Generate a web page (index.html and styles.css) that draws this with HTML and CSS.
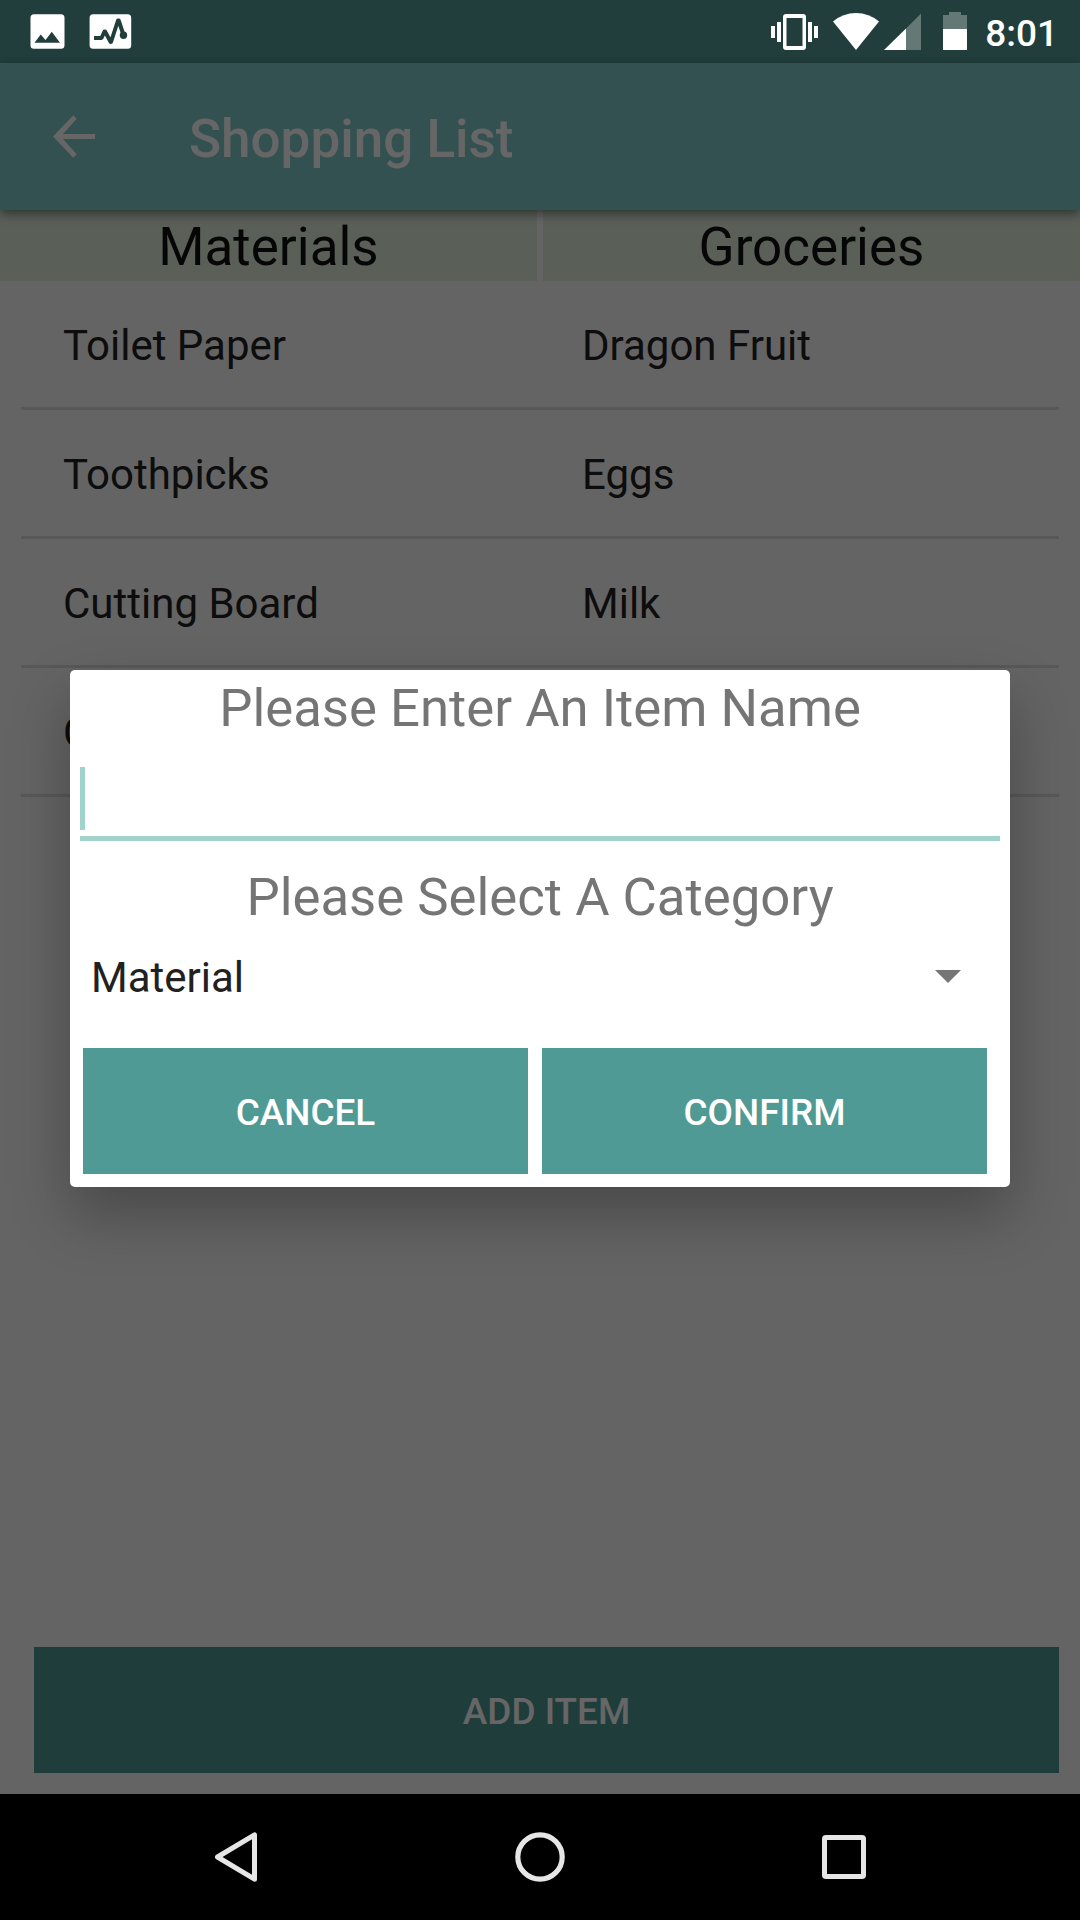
FILE: index.html
```html
<!DOCTYPE html>
<html lang="en">
<head>
<meta charset="utf-8">
<title>Shopping List</title>
<link rel="stylesheet" href="styles.css">
</head>
<body>
<div class="screen">
  <header class="status-bar">
    <svg class="status-left" width="102" height="36" viewBox="0 0 102 36">
      <path fill="#fff" fill-rule="evenodd" d="M4 .3h27a3.500 3.500 0 0 1 3.500 3.500v27.500a3.500 3.500 0 0 1-3.500 3.500H4a3.500 3.500 0 0 1-3.500-3.500V3.800A3.500 3.500 0 0 1 4 .3zM4.500 28.800h25.500L21.800 17.800 15.500 26 10.700 20.500z"/>
      <rect x="59.600" y=".3" width="41.600" height="34.500" rx="3.500" fill="#fff"/>
      <path d="M64 24h7.500l3-6.500h.5L80.700 28h.3L88 6.500h.7L93.500 21" fill="none" stroke="#213e3c" stroke-width="4" stroke-linejoin="round"/>
      <circle cx="93.500" cy="21.300" r="3.700" fill="#213e3c"/>
    </svg>
    <div class="status-right">
      <svg width="197" height="40" viewBox="0 0 197 40">
        <g fill="#fff">
          <path d="M0 14h4v12H0zM6 10h4v20H6zM37 10h4v20h-4zM43 14h4v12h-4z"/>
          <path fill-rule="evenodd" d="M15 2h17a3 3 0 0 1 3 3v30a3 3 0 0 1-3 3H15a3 3 0 0 1-3-3V5a3 3 0 0 1 3-3zm0.500 4v28h16V6z"/>
          <path d="M62 9.500Q72 1 85 1t23 8.500L85 38z"/>
          <path d="M113 38L135 16.500V38z"/>
          <path d="M172 17h24v21h-24z"/>
        </g>
        <path d="M135 16.500L150 1.500V38H135zM172 17V3h6V0h12v3h6v14z" class="faded"/>
      </svg>
      <span class="clock">8:01</span>
    </div>
  </header>

  <main class="app">
    <div class="toolbar">
      <svg class="back" width="42" height="43" viewBox="0 0 42 43">
        <path d="M42 19v5H10L23.700 39.200 20.300 42.800 0 21.500 20.300.2 23.700 3.800 10 19z" fill="#fff"/>
      </svg>
      <h1 class="toolbar-title">Shopping List</h1>
    </div>
    <div class="headings">
      <h2 class="heading">Materials</h2>
      <h2 class="heading">Groceries</h2>
    </div>
    <ul class="list">
      <li class="row"><span>Toilet Paper</span><span>Dragon Fruit</span></li>
      <li class="row"><span>Toothpicks</span><span>Eggs</span></li>
      <li class="row"><span>Cutting Board</span><span>Milk</span></li>
      <li class="row"><span>C</span><span></span></li>
    </ul>
    <button class="button add">ADD ITEM</button>
    <div class="scrim">
      <section class="dialog">
        <h3 class="label">Please Enter An Item Name</h3>
        <div class="field"><div class="cursor"></div></div>
        <h3 class="label">Please Select A Category</h3>
        <div class="spinner">
          <span class="spinner-value">Material</span>
          <svg width="26" height="13" viewBox="0 0 26 13"><path d="M0 0h26L13 13z" fill="#757575"/></svg>
        </div>
        <div class="actions">
          <button class="button">CANCEL</button>
          <button class="button">CONFIRM</button>
        </div>
      </section>
    </div>
  </main>

  <nav class="nav-bar">
    <svg width="44" height="52" viewBox="0 0 44 52"><path d="M3.500 26L40.500 3.800V48.200z" fill="none" stroke="#e6e6e6" stroke-width="5" stroke-linejoin="round"/></svg>
    <svg width="52" height="52" viewBox="0 0 52 52"><circle cx="26" cy="26" r="22.200" fill="none" stroke="#e6e6e6" stroke-width="5.200"/></svg>
    <svg width="44" height="44" viewBox="0 0 44 44"><rect x="2.500" y="2.500" width="39" height="39" rx="1.500" fill="none" stroke="#e6e6e6" stroke-width="5"/></svg>
  </nav>
</div>
</body>
</html>
```
FILE: styles.css
```css
* {
  box-sizing: border-box;
}

body {
  margin: 0;
  font-family: Roboto, sans-serif;
}

h1, h2, h3, ul {
  margin: 0;
  padding: 0;
  font-weight: 400;
}

svg {
  display: block;
}

.screen {
  width: 1080px;
  height: 1920px;
  display: flex;
  flex-direction: column;
  overflow: hidden;
}

.status-bar {
  height: 63px;
  background: #213e3c;
  display: flex;
  justify-content: space-between;
  padding: 12px 22px 0 30px;
}

.status-left {
  margin-top: 2px;
}

.status-right {
  display: flex;
  gap: 17px;
}

.faded {
  fill: #647876;
}

.clock {
  color: #fff;
  font-size: 37px;
  font-weight: 500;
  line-height: 43px;
}

.app {
  position: relative;
  height: 1731px;
  background: #fafafa;
  display: flex;
  flex-direction: column;
}

.toolbar {
  position: relative;
  height: 147px;
  flex: none;
  background: #80cbc8;
  box-shadow: 0 4px 10px rgba(0, 0, 0, 0.45);
  display: flex;
  align-items: center;
  padding-left: 53px;
  gap: 94px;
}

.toolbar-title {
  color: #fff;
  font-size: 53px;
  font-weight: 500;
  line-height: 62px;
  padding-top: 4px;
}

.headings {
  display: grid;
  grid-template-columns: 1fr 1fr;
  gap: 6px;
}

.heading {
  height: 71px;
  background: #e1eddc;
  color: #0f0f0f;
  font-size: 53px;
  line-height: 75px;
  text-align: center;
}

.list {
  list-style: none;
  margin: 0 21px;
  flex: 1;
}

.row {
  height: 129px;
  padding-top: 2px;
  border-bottom: 3px solid #dcdcdc;
  display: grid;
  grid-template-columns: 1fr 1fr;
  align-items: center;
  color: #212121;
  font-size: 42px;
}

.row span {
  padding-left: 42px;
}

.button {
  height: 126px;
  border: 0;
  padding: 2px 0 0;
  background: #4f9a94;
  color: #fff;
  font: 500 36.9px Roboto, sans-serif;
}

.add {
  flex: none;
  margin: 0 21px 21px 34px;
}

.scrim {
  position: absolute;
  inset: 0;
  background: rgba(0, 0, 0, 0.6);
  padding: 607px 70px 0;
}

.dialog {
  height: 517px;
  background: #fff;
  border-radius: 5px;
  box-shadow: 0 28px 60px rgba(0, 0, 0, 0.28);
}

.label {
  color: #757575;
  font-size: 52.7px;
  line-height: 62px;
  padding-top: 7px;
  text-align: center;
}

.field {
  height: 102px;
  margin: 0 10px 18px;
  padding-top: 28px;
  border-bottom: 5px solid #a1d3cd;
}

.cursor {
  width: 5px;
  height: 63px;
  background: #a1d3cd;
}

.spinner {
  height: 63px;
  margin-top: 17px;
  padding: 0 49.5px 0 21px;
  display: flex;
  justify-content: space-between;
  align-items: center;
  color: #212121;
  font-size: 42px;
}

.spinner-value {
  padding-top: 2px;
}

.actions {
  display: grid;
  grid-template-columns: 445px 445px;
  gap: 14px;
  padding: 40px 0 0 13px;
}

.nav-bar {
  height: 126px;
  background: #000;
  display: flex;
  justify-content: space-between;
  align-items: center;
  padding: 0 214px;
}
```
